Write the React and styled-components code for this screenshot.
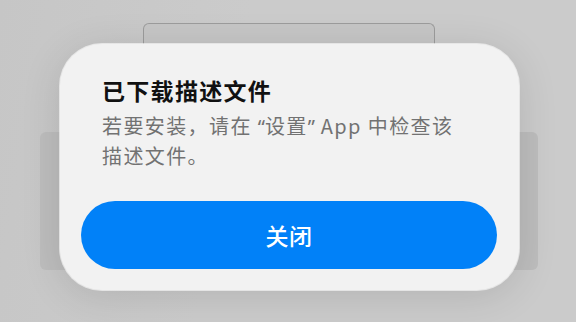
import React from "react";
import styled, { createGlobalStyle } from "styled-components";

const Global = createGlobalStyle`
  html, body { margin: 0; padding: 0; }
  body {
    width: 576px;
    height: 322px;
    overflow: hidden;
    background: #cacaca;
    font-family: "Noto Sans CJK SC", "Noto Sans", sans-serif;
  }
`;

const Stage = styled.div`
  position: relative;
  width: 576px;
  height: 322px;
  padding-top: 23px;
  box-sizing: border-box;
  background: linear-gradient(100deg, #c6c6c6 0%, #cbcbcb 40%, #cbcbcb 100%);
  display: flex;
  flex-direction: column;
  align-items: flex-start;
`;

const BackCard = styled.div`
  margin-left: 143px;
  width: 292px;
  height: 109px;
  box-sizing: border-box;
  border: 1.5px solid #9c9c9c;
  border-bottom: none;
  border-radius: 6px 6px 0 0;
  background: #c6c6c6;
`;

const BackPanel = styled.div`
  margin-left: 40px;
  width: 498px;
  height: 138px;
  border-radius: 6px;
  background: #bdbdbd;
`;

const Dialog = styled.div`
  position: absolute;
  left: 60px;
  top: 44px;
  width: 459px;
  height: 246px;
  box-sizing: border-box;
  padding: 31px 22px 21px 21px;
  border-radius: 42px;
  background: #f2f2f2;
  box-shadow: 0 0 0 1px rgba(255, 255, 255, 0.6), 0 6px 40px rgba(0, 0, 0, 0.12);
  display: flex;
  flex-direction: column;
`;

const Texts = styled.div`
  padding: 0 6px 0 21px;
  display: flex;
  flex-direction: column;
  gap: 6px;
`;

const Title = styled.h1`
  margin: 0;
  font-size: 23px;
  line-height: 30px;
  font-weight: 700;
  letter-spacing: 1.3px;
  color: #111111;
`;

const Body = styled.p`
  margin: 0;
  font-size: 20px;
  line-height: 29px;
  font-weight: 400;
  letter-spacing: 1.4px;
  color: #727272;
`;

const Quote = styled.span`
  font-family: "Noto Sans", sans-serif;
  letter-spacing: 0;
`;

const CloseButton = styled.button`
  margin-top: auto;
  width: 100%;
  height: 68px;
  border: none;
  border-radius: 34px;
  background: #0181f8;
  color: #ffffff;
  font-family: inherit;
  font-size: 23px;
  font-weight: 500;
  letter-spacing: 0.5px;
  display: flex;
  align-items: center;
  justify-content: center;
  cursor: pointer;
`;

export default function App() {
  return (
    <>
      <Global />
      <Stage>
        <BackCard />
        <BackPanel />
        <Dialog>
          <Texts>
            <Title>已下载描述文件</Title>
            <Body>
              若要安装，请在 <Quote>“</Quote>设置<Quote>”</Quote> App 中检查该
              <br />
              描述文件。
            </Body>
          </Texts>
          <CloseButton>关闭</CloseButton>
        </Dialog>
      </Stage>
    </>
  );
}
